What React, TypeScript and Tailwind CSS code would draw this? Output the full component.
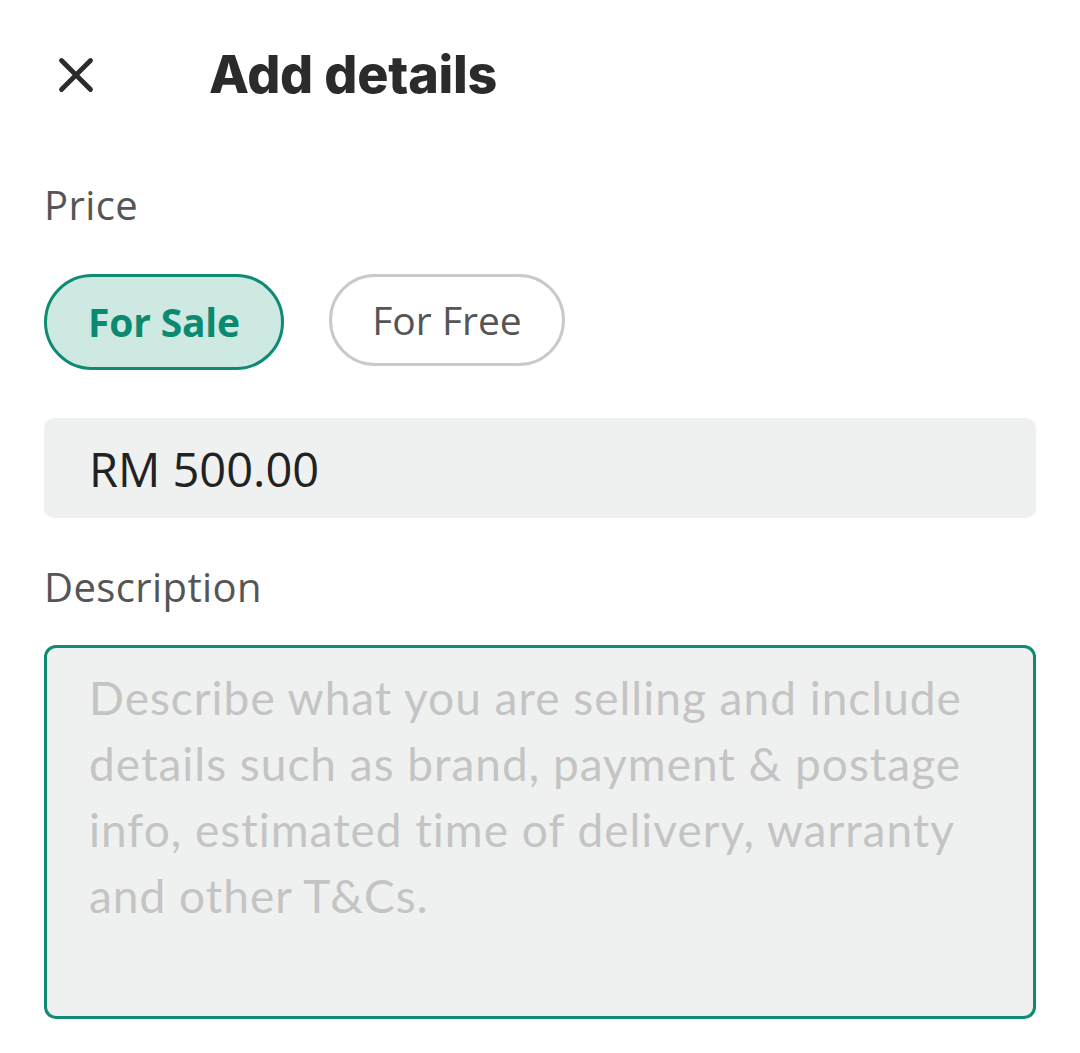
import { X } from "lucide-react";

export default function App() {
  return (
    <div className="w-[1080px] h-[1053px] bg-white font-['Open_Sans',sans-serif]">
      <div className="px-[44px] pt-[44px]">
        <header className="flex items-center h-[62px]">
          <button className="w-[64px] h-[62px] flex items-center justify-start pl-[3px] text-[#2b2b2b]">
            <X size={58} strokeWidth={2} />
          </button>
          <h1 className="ml-[101px] text-[52px] leading-none font-extrabold tracking-[-0.2px] text-[#2b2b2b] font-['Inter',sans-serif]">
            Add details
          </h1>
        </header>

        <p className="mt-[77px] text-[40px] leading-[44px] tracking-[0.4px] text-[#555]">Price</p>

        <div className="mt-[47px] flex items-start gap-[45px]">
          <button className="w-[240px] h-[96px] rounded-full border-[3px] border-[#0f8a74] bg-[#cde9e2] text-[39px] font-bold text-[#0b8a72] tracking-[-0.2px]">
            For Sale
          </button>
          <button className="w-[236px] h-[92px] rounded-full border-[3px] border-[#c9c9c9] bg-white text-[39px] text-[#555]">
            For Free
          </button>
        </div>

        <div className="mt-[48px] h-[100px] rounded-[10px] bg-[#eff1f0] flex items-center px-[45px]">
          <span className="text-[47px] text-[#222] pt-[2px]">RM 500.00</span>
        </div>

        <p className="mt-[47px] text-[40px] leading-[44px] tracking-[0.4px] text-[#555]">Description</p>

        <div className="mt-[36px] h-[374px] rounded-[12px] border-[3px] border-[#0f8a74] bg-[#eff1f0] px-[42px] pt-[17px]">
          <p className="text-[46px] leading-[66px] tracking-[1px] text-[#c4c4c4] font-['Lato',sans-serif]">
            Describe what you are selling and include
            <br />
            details such as brand, payment &amp; postage
            <br />
            info, estimated time of delivery, warranty
            <br />
            and other T&amp;Cs.
          </p>
        </div>
      </div>
    </div>
  );
}
